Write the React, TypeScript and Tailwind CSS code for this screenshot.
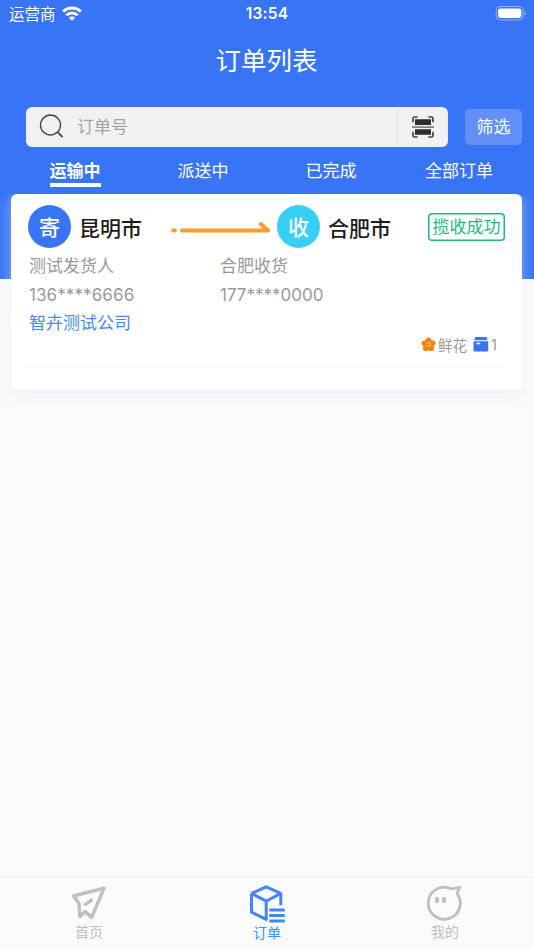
import { useState } from 'react'
import type { ReactNode } from 'react'

interface Order {
  id: number
  from: string
  to: string
  sender: string
  senderPhone: string
  receiver: string
  receiverPhone: string
  company: string
  status: string
  goods: string
  count: number
}

const orders: Order[] = [
  {
    id: 1,
    from: '昆明市',
    to: '合肥市',
    sender: '测试发货人',
    senderPhone: '136****6666',
    receiver: '合肥收货',
    receiverPhone: '177****0000',
    company: '智卉测试公司',
    status: '揽收成功',
    goods: '鲜花',
    count: 1,
  },
]

const tabs = ['运输中', '派送中', '已完成', '全部订单']

function StatusBar() {
  return (
    <div className="relative h-7 flex items-center justify-between pl-[9px] pr-[7px]">
      <div className="flex items-center gap-[6px]">
        <span className="text-[15.5px] leading-7 pt-[2px]">运营商</span>
        <svg width="20" height="15" viewBox="0 0 20 15" fill="none" stroke="white" strokeWidth="3" className="-mt-[2px]">
          <path d="M1.2 5.6a12.6 12.6 0 0 1 17.6 0" />
          <path d="M4.4 9.2a8 8 0 0 1 11.2 0" />
          <path d="M10 14.8 6.9 11.7a4.4 4.4 0 0 1 6.2 0Z" fill="white" stroke="none" />
        </svg>
      </div>
      <span className="absolute left-1/2 top-0 -translate-x-1/2 text-[15.5px] leading-7 font-semibold tracking-[0.2px]">13:54</span>
      <svg width="32" height="15" viewBox="0 0 32 15" className="-mt-[1px]">
        <rect x="1.2" y="0.5" width="27" height="13.4" rx="4" fill="none" stroke="white" strokeOpacity="0.45" />
        <rect x="3" y="2.4" width="23.4" height="9.6" rx="2.4" fill="white" />
        <path d="M29.7 4.9c1.7.7 1.7 3.9 0 4.6Z" fill="white" fillOpacity="0.5" />
      </svg>
    </div>
  )
}

function SearchBar() {
  return (
    <div className="flex items-center pl-[26px] pr-3">
      <div className="w-[422px] h-10 flex items-center bg-[#f1f1f1] rounded-[6px]">
        <svg width="26" height="26" viewBox="0 0 26 26" fill="none" stroke="#444" strokeWidth="1.4" className="ml-[13px]">
          <circle cx="11.5" cy="11" r="10" />
          <path d="m18.6 18.2 5 5" strokeWidth="1.8" />
        </svg>
        <span className="flex-1 pl-3 pt-[1px] text-[17px] text-[#a3a3a3]">订单号</span>
        <div className="w-[51px] h-[36px] border-l border-[#e4e4e4] flex items-center justify-center">
          <svg width="22" height="22" viewBox="0 0 22 22" fill="none" stroke="#444" strokeWidth="1.7" className="-mt-[1px]">
            <path d="M1 6.2V2.5Q1 1 2.5 1h3.2M16.3 1h3.2Q21 1 21 2.5v3.7M1 15.8v3.7Q1 21 2.5 21h3.2M16.3 21h3.2q1.5 0 1.5-1.5v-3.7" />
            <path d="M3 3.2h16V9H3zM3 13.2h16v5.5H3z" fill="#2e2e2e" stroke="none" />
            <path d="M0 11.1h22" stroke="#777" strokeWidth="1.6" />
          </svg>
        </div>
      </div>
      <button className="ml-[17px] w-[57px] h-9 rounded-[5px] bg-[#6290f8] pt-[2px] text-[17px]">筛选</button>
    </div>
  )
}

function City({ mark, name, color }: { mark: string; name: string; color: string }) {
  return (
    <div className="flex items-center gap-2">
      <span className={`w-[43px] h-[43px] pt-[3px] rounded-full flex items-center justify-center text-[21px] font-medium text-white ${color}`}>
        {mark}
      </span>
      <span className="pt-[4px] text-[21px] font-medium text-[#1c1c1c]">{name}</span>
    </div>
  )
}

function OrderCard({ order }: { order: Order }) {
  return (
    <div className="h-[196px] bg-white rounded-[6px] px-[17px] pt-[11px] shadow-[0_3px_14px_rgba(225,232,250,0.5)]">
      <div className="flex items-center">
        <div className="w-[142px]">
          <City mark="寄" name={order.from} color="bg-[#3875f6]" />
        </div>
        <svg width="101" height="14" viewBox="0 0 101 14" fill="none" stroke="#fc9c2c" strokeWidth="4.2" strokeLinecap="round" strokeLinejoin="round" className="mt-[2px]">
          <path d="M3.2 9.5h1.6M12 9.5h86L91 3.2" />
        </svg>
        <div className="ml-[6px]">
          <City mark="收" name={order.to} color="bg-[#38cff7]" />
        </div>
        <span className="ml-auto w-[77px] h-7 pt-[2px] flex items-center justify-center whitespace-nowrap rounded-[4px] shadow-[inset_0_0_0_1.5px_#1abc7c] text-[17px] text-[#1abc7c]">
          {order.status}
        </span>
      </div>
      <div className="grid grid-cols-[191px_1fr] pl-[1px] text-[17px] leading-[28.5px] text-[#999] mt-[4px]">
        <span>{order.sender}</span>
        <span>{order.receiver}</span>
        <span className="tracking-[0.1px]">{order.senderPhone}</span>
        <span>{order.receiverPhone}</span>
        <span className="text-[#4489f8]">{order.company}</span>
      </div>
      <div className="h-[29px] flex items-center justify-end pr-[8px] pb-[14px] border-b border-[#f5f5f5] text-[14.5px] leading-4 text-[#999]">
        <svg width="15" height="15" viewBox="0 0 15 15" className="mr-[2px]">
          <g fill="#ff8208">
            <circle cx="7.5" cy="3.3" r="2.9" />
            <circle cx="11.6" cy="6.3" r="2.9" />
            <circle cx="10.1" cy="11.2" r="2.9" />
            <circle cx="4.9" cy="11.2" r="2.9" />
            <circle cx="3.4" cy="6.3" r="2.9" />
            <circle cx="7.5" cy="7.6" r="5" />
          </g>
          <circle cx="7.5" cy="7.5" r="1.9" fill="none" stroke="#ffdcb5" strokeWidth="1" />
        </svg>
        <span className="pt-[2px]">{order.goods}</span>
        <svg width="16" height="15" viewBox="0 0 16 15" fill="#3875f6" className="ml-[6px] mr-[2px]">
          <path d="M2.4 0h11.2l1 3.2H1.2Z" />
          <path d="M.5 4.2h14.7v9q0 1.3-1.3 1.3H1.8q-1.3 0-1.3-1.3Z" />
          <path d="M3.3 6.5h3.8" stroke="white" strokeWidth="1.5" />
        </svg>
        <span className="pt-[1px]">{order.count}</span>
      </div>
    </div>
  )
}

function NavItem({ label, active, children }: { label: string; active?: boolean; children: ReactNode }) {
  return (
    <div className={`flex-1 flex flex-col items-center pt-[6px] ${active ? 'text-[#2e95fa]' : 'text-[#bfbfbf]'}`}>
      <svg width="40" height="39" viewBox="0 0 40 39" fill="none" strokeWidth="3" strokeLinejoin="round" className={active ? 'stroke-[#4285f7]' : 'stroke-[#bfbfbf]'}>
        {children}
      </svg>
      <span className={`text-[14px] leading-5 ${active ? '' : '-mt-[1px]'}`}>{label}</span>
    </div>
  )
}

export default function App() {
  const [tab, setTab] = useState(0)

  return (
    <div className="w-[534px] h-[950px] flex flex-col overflow-hidden bg-[#fafafa] font-[Inter,'Noto_Sans_CJK_SC',sans-serif]">
      <header className="h-[279px] shrink-0 bg-[#3875f6] text-white">
        <StatusBar />
        <h1 className="h-[79px] text-center text-[25.5px] leading-[66px] -ml-px">订单列表</h1>
        <SearchBar />
        <div className="grid grid-cols-4 px-[11px]">
          {tabs.map((name, i) => (
            <button key={name} onClick={() => setTab(i)} className="flex flex-col items-center pt-[12px] text-[17px] leading-6">
              <span className={i === tab ? 'font-bold border-b-4 border-white' : ''}>{name}</span>
            </button>
          ))}
        </div>
      </header>

      <main className="flex-1 -mt-[85px] pl-[11px] pr-3 overflow-hidden">
        {orders.map(order => <OrderCard key={order.id} order={order} />)}
      </main>

      <nav className="h-[74px] shrink-0 flex border-t-2 border-[#f4f4f4]">
        <NavItem label="首页">
          <path d="M4.6 12 35 4.2 22.6 33.6l-6.5-6-5.3 4.8-.8-13Z" strokeWidth="3.4" />
          <path d="m16.3 20.6 6.2-4.6" strokeLinecap="round" strokeWidth="3.2" />
        </NavItem>
        <NavItem label="订单" active>
          <path d="M4.5 9.4 19.2 2.8 33.8 9.4v11.8M4.5 9.4v18.8L19.2 35.4V17.2M4.5 9.4l14.7 7.8 14.6-7.8" />
          <path d="M22.3 25.9h15.5M22.3 31.4h15.5M22.3 37.1h15.5" strokeWidth="3" />
        </NavItem>
        <NavItem label="我的">
          <path d="M26.5 4.9A16 16 0 1 0 32 9.5L34.8 3.4 26.5 4.9Z" strokeWidth="2.8" />
          <path d="M12 15.2v2M19 15.2v2" strokeWidth="4.2" strokeLinecap="round" />
        </NavItem>
      </nav>
    </div>
  )
}
